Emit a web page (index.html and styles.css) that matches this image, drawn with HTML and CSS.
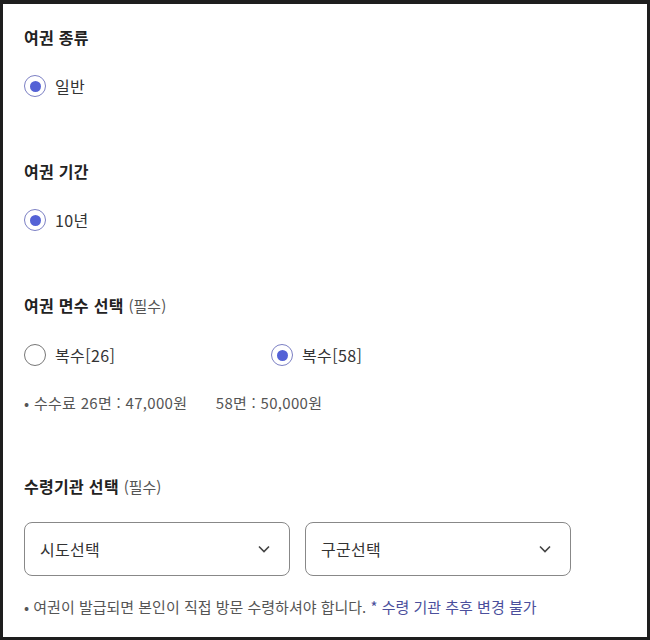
FILE: index.html
```html
<!DOCTYPE html>
<html lang="ko">
<head>
<meta charset="utf-8">
<link rel="stylesheet" href="styles.css">
</head>
<body>
<div class="frame">
  <section class="sec sec-first">
    <h2 class="title">여권 종류</h2>
    <div class="radios">
      <label class="radio checked"><span class="dot"></span><span class="lbl">일반</span></label>
    </div>
  </section>
  <section class="sec">
    <h2 class="title">여권 기간</h2>
    <div class="radios">
      <label class="radio checked"><span class="dot"></span><span class="lbl">10년</span></label>
    </div>
  </section>
  <section class="sec">
    <h2 class="title">여권 면수 선택 <span class="req">(필수)</span></h2>
    <div class="radios">
      <label class="radio wide"><span class="dot"></span><span class="lbl">복수[26]</span></label>
      <label class="radio checked"><span class="dot"></span><span class="lbl">복수[58]</span></label>
    </div>
    <p class="note note-fee">• 수수료 26면 : 47,000원 <span class="gap"></span>58면 : 50,000원</p>
  </section>
  <section class="sec">
    <h2 class="title">수령기관 선택 <span class="req">(필수)</span></h2>
    <div class="selects">
      <div class="select"><span>시도선택</span>
        <svg width="12" height="8" viewBox="0 0 12 8"><path d="M1 1.5 L6 6.5 L11 1.5" fill="none" stroke="#444" stroke-width="1.6"/></svg>
      </div>
      <div class="select"><span>구군선택</span>
        <svg width="12" height="8" viewBox="0 0 12 8"><path d="M1 1.5 L6 6.5 L11 1.5" fill="none" stroke="#444" stroke-width="1.6"/></svg>
      </div>
    </div>
    <p class="note note-last">• 여권이 발급되면 본인이 직접 방문 수령하셔야 합니다. <span class="warn">* 수령 기관 추후 변경 불가</span></p>
  </section>
</div>
</body>
</html>
```
FILE: styles.css
```css
html, body {
  margin: 0;
  padding: 0;
  background: #1e1e1e;
}
body {
  font-family: "Noto Sans CJK KR", "Noto Sans", sans-serif;
  color: #333;
}
.frame {
  box-sizing: border-box;
  margin: 4px 3px 3px 3px;
  height: 633px;
  background: #fff;
  padding: 21px 21px 0 21px;
  overflow: hidden;
}
.sec {
  margin-top: 61px;
}
.sec-first {
  margin-top: 0;
}
.title {
  margin: 0;
  font-size: 16px;
  line-height: 24px;
  font-weight: 700;
  color: #222;
  letter-spacing: 0.3px;
}
.req {
  font-size: 15px;
  font-weight: 400;
  color: #555;
  letter-spacing: 0;
}
.radios {
  display: flex;
  margin-top: 25px;
  height: 24px;
}
.radio {
  display: flex;
  align-items: center;
  gap: 9px;
  font-size: 16px;
  line-height: 24px;
  color: #333;
  letter-spacing: 0.4px;
}
.radio.wide {
  width: 247px;
}
.dot {
  box-sizing: border-box;
  width: 22px;
  height: 22px;
  border-radius: 50%;
  border: 1.5px solid #777;
  display: flex;
  align-items: center;
  justify-content: center;
}
.radio.checked .dot {
  border-color: #7c80c4;
}
.radio.checked .dot::after {
  content: "";
  width: 11px;
  height: 11px;
  border-radius: 50%;
  background: #5462d6;
}
.note {
  margin: 26px 0 0 0;
  font-size: 15px;
  line-height: 20px;
  color: #555;
}
.note-fee {
  letter-spacing: 0.3px;
}
.gap {
  display: inline-block;
  width: 24px;
}
.selects {
  display: flex;
  gap: 15px;
  margin-top: 23px;
}
.select {
  box-sizing: border-box;
  width: 266px;
  height: 54px;
  border: 1px solid #888;
  border-radius: 8px;
  display: flex;
  align-items: center;
  justify-content: space-between;
  padding: 0 19px 0 15px;
  font-size: 16px;
  color: #333;
  letter-spacing: 0.3px;
}
.note-last {
  margin-top: 21px;
}
.warn {
  color: #4b4f9c;
}
```
